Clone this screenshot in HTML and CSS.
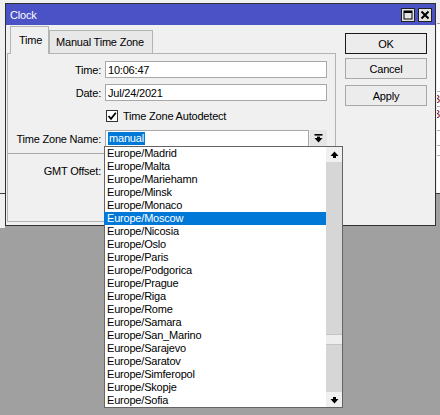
FILE: index.html
```html
<!DOCTYPE html>
<html>
<head>
<meta charset="utf-8">
<link rel="stylesheet" href="styles.css">
</head>
<body>
<div class="backdrop">
  <div class="back-strip">
    <div class="back-head"></div>
    <div class="back-row r1"></div>
    <div class="back-row r2"><span class="back-txt">B</span></div>
    <div class="back-row r3"><span class="back-txt">B</span></div>
    <div class="back-row r4"></div>
    <div class="back-row r5"></div>
  </div>
</div>
<div class="back-left"></div>

<div class="win">
  <div class="titlebar">
    <span class="title">Clock</span>
    <div class="tbtns">
      <span class="tbtn">
        <svg width="10" height="10" viewBox="0 0 10 10"><rect x="1" y="1" width="8" height="8" fill="none" stroke="#000" stroke-width="1"/><rect x="1" y="1" width="8" height="2" fill="#000"/></svg>
      </span>
      <span class="tbtn">
        <svg width="10" height="10" viewBox="0 0 10 10"><path d="M1.5 1.5 L8.5 8.5 M8.5 1.5 L1.5 8.5" stroke="#000" stroke-width="2"/></svg>
      </span>
    </div>
  </div>

  <div class="body">
    <div class="main">
      <div class="tabs">
        <div class="tab active">Time</div>
        <div class="tab">Manual Time Zone</div>
      </div>
      <div class="panel">
        <div class="row">
          <label class="lbl">Time:</label>
          <div class="field">10:06:47</div>
        </div>
        <div class="row">
          <label class="lbl">Date:</label>
          <div class="field">Jul/24/2021</div>
        </div>
        <div class="row">
          <span class="lbl"></span>
          <div class="check">
            <span class="box">
              <svg width="10" height="10" viewBox="0 0 10 10"><path d="M1.5 5 L4 7.8 L8.8 1.8" fill="none" stroke="#000" stroke-width="1.8"/></svg>
            </span>
            <span>Time Zone Autodetect</span>
          </div>
        </div>
        <div class="row">
          <label class="lbl">Time Zone Name:</label>
          <div class="combo">
            <div class="field grow"><span class="sel">manual</span></div>
            <span class="combo-btn">
              <svg width="9" height="9" viewBox="0 0 9 9"><rect x="0.5" y="0" width="8" height="1.6" fill="#000"/><path d="M0.5 4 L8.5 4 L4.5 8.5 Z" fill="#000"/><rect x="3" y="2.6" width="3" height="2" fill="#000"/></svg>
            </span>
          </div>
        </div>
        <div class="sep"></div>
        <div class="row">
          <label class="lbl">GMT Offset:</label>
          <div class="field"></div>
        </div>
      </div>
    </div>
    <div class="buttons">
      <div class="btn default">OK</div>
      <div class="btn">Cancel</div>
      <div class="btn apply">Apply</div>
    </div>
  </div>
</div>

<div class="dropdown">
  <ul class="list">
    <li>Europe/Madrid</li>
    <li>Europe/Malta</li>
    <li>Europe/Mariehamn</li>
    <li>Europe/Minsk</li>
    <li>Europe/Monaco</li>
    <li class="hl">Europe/Moscow</li>
    <li>Europe/Nicosia</li>
    <li>Europe/Oslo</li>
    <li>Europe/Paris</li>
    <li>Europe/Podgorica</li>
    <li>Europe/Prague</li>
    <li>Europe/Riga</li>
    <li>Europe/Rome</li>
    <li>Europe/Samara</li>
    <li>Europe/San_Marino</li>
    <li>Europe/Sarajevo</li>
    <li>Europe/Saratov</li>
    <li>Europe/Simferopol</li>
    <li>Europe/Skopje</li>
    <li>Europe/Sofia</li>
  </ul>
  <div class="scroll">
    <span class="sbtn">
      <svg width="9" height="8" viewBox="0 0 9 8"><path d="M0.5 5 L4.5 0.5 L8.5 5 Z" fill="#000"/><rect x="3" y="4.5" width="3" height="2.5" fill="#000"/></svg>
    </span>
    <div class="track"><div class="thumb"></div></div>
    <span class="sbtn">
      <svg width="9" height="8" viewBox="0 0 9 8"><path d="M0.5 3 L4.5 7.5 L8.5 3 Z" fill="#000"/><rect x="3" y="1" width="3" height="2.5" fill="#000"/></svg>
    </span>
  </div>
</div>
</body>
</html>
```

FILE: styles.css
```css
* { box-sizing: border-box; }

html, body { margin: 0; padding: 0; }

body {
  width: 440px;
  height: 415px;
  overflow: hidden;
  position: relative;
  background: #a0a0a0;
  font-family: "Liberation Sans", Arial, sans-serif;
  font-size: 11px;
  letter-spacing: -0.2px;
  color: #000;
}

/* windows lying behind the dialog */
.backdrop {
  position: absolute;
  left: 0;
  top: 0;
  width: 440px;
  height: 194px;
  background: #f0f0f0;
  border-bottom: 1px solid #404040;
}

.back-strip {
  position: absolute;
  left: 437px;
  top: 0;
  width: 10px;
  height: 193px;
  background: #fff;
  display: flex;
  flex-direction: column;
}

.back-head { height: 24px; background: #f0f0f0; border-bottom: 1px solid #a0a0a0; }
.back-row { border-bottom: 1px solid #b0b0b0; overflow: hidden; color: #800000; line-height: 14px; }
.back-row.r1 { height: 68px; }
.back-row.r2 { height: 15px; }
.back-row.r3 { height: 24px; }
.back-row.r4 { height: 15px; }
.back-row.r5 { height: 10px; }
.back-txt { display: block; margin-left: -4px; font-size: 11px; }

.back-left {
  position: absolute;
  left: 0;
  top: 194px;
  width: 5px;
  height: 34px;
  background: #f0f0f0;
}

/* the Clock dialog */
.win {
  position: absolute;
  left: 5px;
  top: 3px;
  width: 431px;
  height: 223px;
  background: #f0f0f0;
  border: 1px solid #303030;
}

.titlebar {
  height: 21px;
  background: #4b52c6;
  display: flex;
  align-items: center;
  padding: 0 3px 0 4px;
}

.title { color: #fff; font-size: 11px; }

.tbtns { margin-left: auto; display: flex; gap: 3px; }

.tbtn {
  width: 14px;
  height: 14px;
  background: #e4e4e4;
  border: 1px solid #202020;
  display: flex;
  align-items: center;
  justify-content: center;
}

.body { display: flex; padding-top: 1px; }

.main { margin-left: 1px; width: 329px; }

.tabs { display: flex; align-items: flex-end; height: 27px; padding-left: 3px; }

.tab {
  height: 23px;
  padding: 0 8px 0 6px;
  display: flex;
  align-items: center;
  background: #e8e8e8;
  border: 1px solid #b4b4b4;
  border-bottom: none;
}

.tab.active {
  height: 28px;
  margin-bottom: -1px;
  background: #f0f0f0;
  padding: 0 8px 2px 8px;
  position: relative;
  z-index: 1;
  width: 39px;
}

.panel {
  height: 169px;
  border: 1px solid #b4b4b4;
  padding: 7px 8px 0 0;
}

.row {
  display: flex;
  align-items: center;
  height: 17px;
  margin-bottom: 6px;
}

.lbl { width: 93px; text-align: right; flex: none; margin-right: 4px; }

.field {
  width: 222px;
  height: 17px;
  background: #fff;
  border: 1px solid #a8a8a8;
  padding-left: 2px;
  display: flex;
  align-items: center;
}

.field.grow { width: 204px; }

.sel { background: #0078d7; color: #fff; padding: 0 1px; line-height: 13px; }

.combo { display: flex; gap: 1px; }

.combo-btn {
  width: 17px;
  height: 17px;
  background: #e6e6e6;
  display: flex;
  align-items: center;
  justify-content: center;
}

.check { display: flex; align-items: center; gap: 5px; margin-left: 1px; }

.box {
  width: 12px;
  height: 12px;
  background: #fff;
  border: 1px solid #333;
  display: flex;
  align-items: center;
  justify-content: center;
}

.sep { height: 1px; background: #a8a8a8; margin: 1px 0 8px 0; width: 327px; }

.buttons {
  margin-left: 9px;
  padding-top: 7px;
  display: flex;
  flex-direction: column;
  gap: 4px;
}

.btn {
  width: 82px;
  height: 21px;
  background: #ececec;
  border: 1px solid #a8a8a8;
  display: flex;
  align-items: center;
  justify-content: center;
}

.btn.default { border-color: #1a1a1a; }
.btn.apply { margin-top: 2px; }

/* open drop-down list of the time zone combo */
.dropdown {
  position: absolute;
  left: 104px;
  top: 146px;
  width: 239px;
  height: 262px;
  background: #fff;
  border: 1px solid #646464;
  display: flex;
}

.list { list-style: none; margin: 0; padding: 0; flex: 1; }

.list li { height: 13px; line-height: 13px; padding-left: 2px; white-space: nowrap; }

.list li.hl { background: #0078d7; color: #fff; margin-left: -1px; padding-left: 3px; }

.scroll {
  width: 16px;
  display: flex;
  flex-direction: column;
  background: #d6d6d6;
}

.sbtn {
  height: 15px;
  background: #f0f0f0;
  display: flex;
  align-items: center;
  justify-content: center;
  flex: none;
}

.track { flex: 1; padding-top: 172px; }

.thumb { height: 11px; background: #ededed; border-top: 1px solid #c4c4c4; border-bottom: 1px solid #c4c4c4; }
```
